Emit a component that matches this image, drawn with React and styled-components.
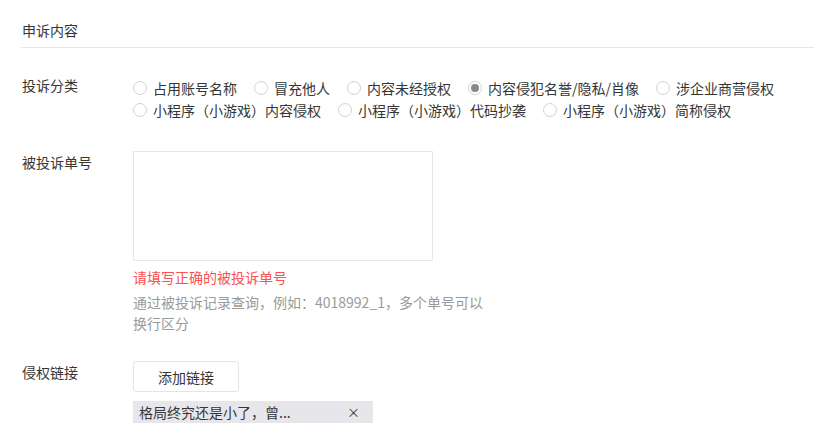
import styled, { createGlobalStyle } from 'styled-components'

const GlobalStyle = createGlobalStyle`
  body {
    margin: 0;
    background: #fff;
    font-family: "Noto Sans CJK SC", "Liberation Sans", sans-serif;
    color: #353535;
    font-size: 14px;
  }
`

const Page = styled.div`
  padding-left: 21px;
`

const Header = styled.div`
  padding: 19px 0 6px 1px;
  line-height: 22px;
  border-bottom: 1px solid #e7e7eb;
`

const Row = styled.div`
  display: flex;
  margin-top: ${p => p.$gap}px;
`

const Label = styled.div`
  width: 111px;
  flex: none;
  padding-left: 1px;
  line-height: 22px;
`

const Content = styled.div`
  flex: 1;
  display: flex;
  flex-direction: column;
  align-items: flex-start;
`

const Options = styled.div`
  display: flex;
  flex-wrap: wrap;
  padding-top: 3px;
`

const Option = styled.label`
  display: flex;
  align-items: center;
  margin-right: 17px;
  line-height: 22px;
  white-space: nowrap;
`

const Radio = styled.span`
  width: 14px;
  height: 14px;
  box-sizing: border-box;
  border: 1px solid #d2d2d2;
  border-radius: 50%;
  margin-right: 6px;
  display: flex;
  align-items: center;
  justify-content: center;
  &::after {
    content: '';
    width: 8px;
    height: 8px;
    border-radius: 50%;
    background: ${p => (p.$checked ? '#888' : 'transparent')};
  }
`

const TextArea = styled.textarea`
  width: 300px;
  height: 110px;
  box-sizing: border-box;
  border: 1px solid #e7e7eb;
  resize: none;
  outline: none;
  margin: 0;
  font: inherit;
`

const Error = styled.div`
  color: #fa5151;
  line-height: 22px;
  margin-top: 5px;
`

const Hint = styled.div`
  color: #9a9a9a;
  line-height: 21px;
  margin-top: 4px;
  max-width: 360px;
`

const Button = styled.button`
  width: 106px;
  height: 31px;
  box-sizing: border-box;
  border: 1px solid #e4e4e4;
  border-radius: 3px;
  background: #fff;
  color: #353535;
  font: inherit;
  padding: 0;
`

const Tag = styled.div`
  margin-top: 9px;
  width: 240px;
  height: 22px;
  box-sizing: border-box;
  background: #e7e7eb;
  display: flex;
  align-items: center;
  justify-content: space-between;
  padding: 0 13px 0 6px;
  line-height: 22px;
`

const Close = styled.span`
  font-size: 13px;
  color: #353535;
`

const options = [
  '占用账号名称',
  '冒充他人',
  '内容未经授权',
  '内容侵犯名誉/隐私/肖像',
  '涉企业商营侵权',
  '小程序（小游戏）内容侵权',
  '小程序（小游戏）代码抄袭',
  '小程序（小游戏）简称侵权',
]

export default function App() {
  return (
    <Page>
      <GlobalStyle />
      <Header>申诉内容</Header>
      <Row $gap={26}>
        <Label>投诉分类</Label>
        <Options>
          {options.map(o => (
            <Option key={o}>
              <Radio $checked={o === '内容侵犯名誉/隐私/肖像'} />
              {o}
            </Option>
          ))}
        </Options>
      </Row>
      <Row $gap={30}>
        <Label>被投诉单号</Label>
        <Content>
          <TextArea />
          <Error>请填写正确的被投诉单号</Error>
          <Hint>通过被投诉记录查询，例如：4018992_1，多个单号可以换行区分</Hint>
        </Content>
      </Row>
      <Row $gap={27}>
        <Label>侵权链接</Label>
        <Content>
          <Button>添加链接</Button>
          <Tag>
            <span>格局终究还是小了，曾...</span>
            <Close>×</Close>
          </Tag>
        </Content>
      </Row>
    </Page>
  )
}
